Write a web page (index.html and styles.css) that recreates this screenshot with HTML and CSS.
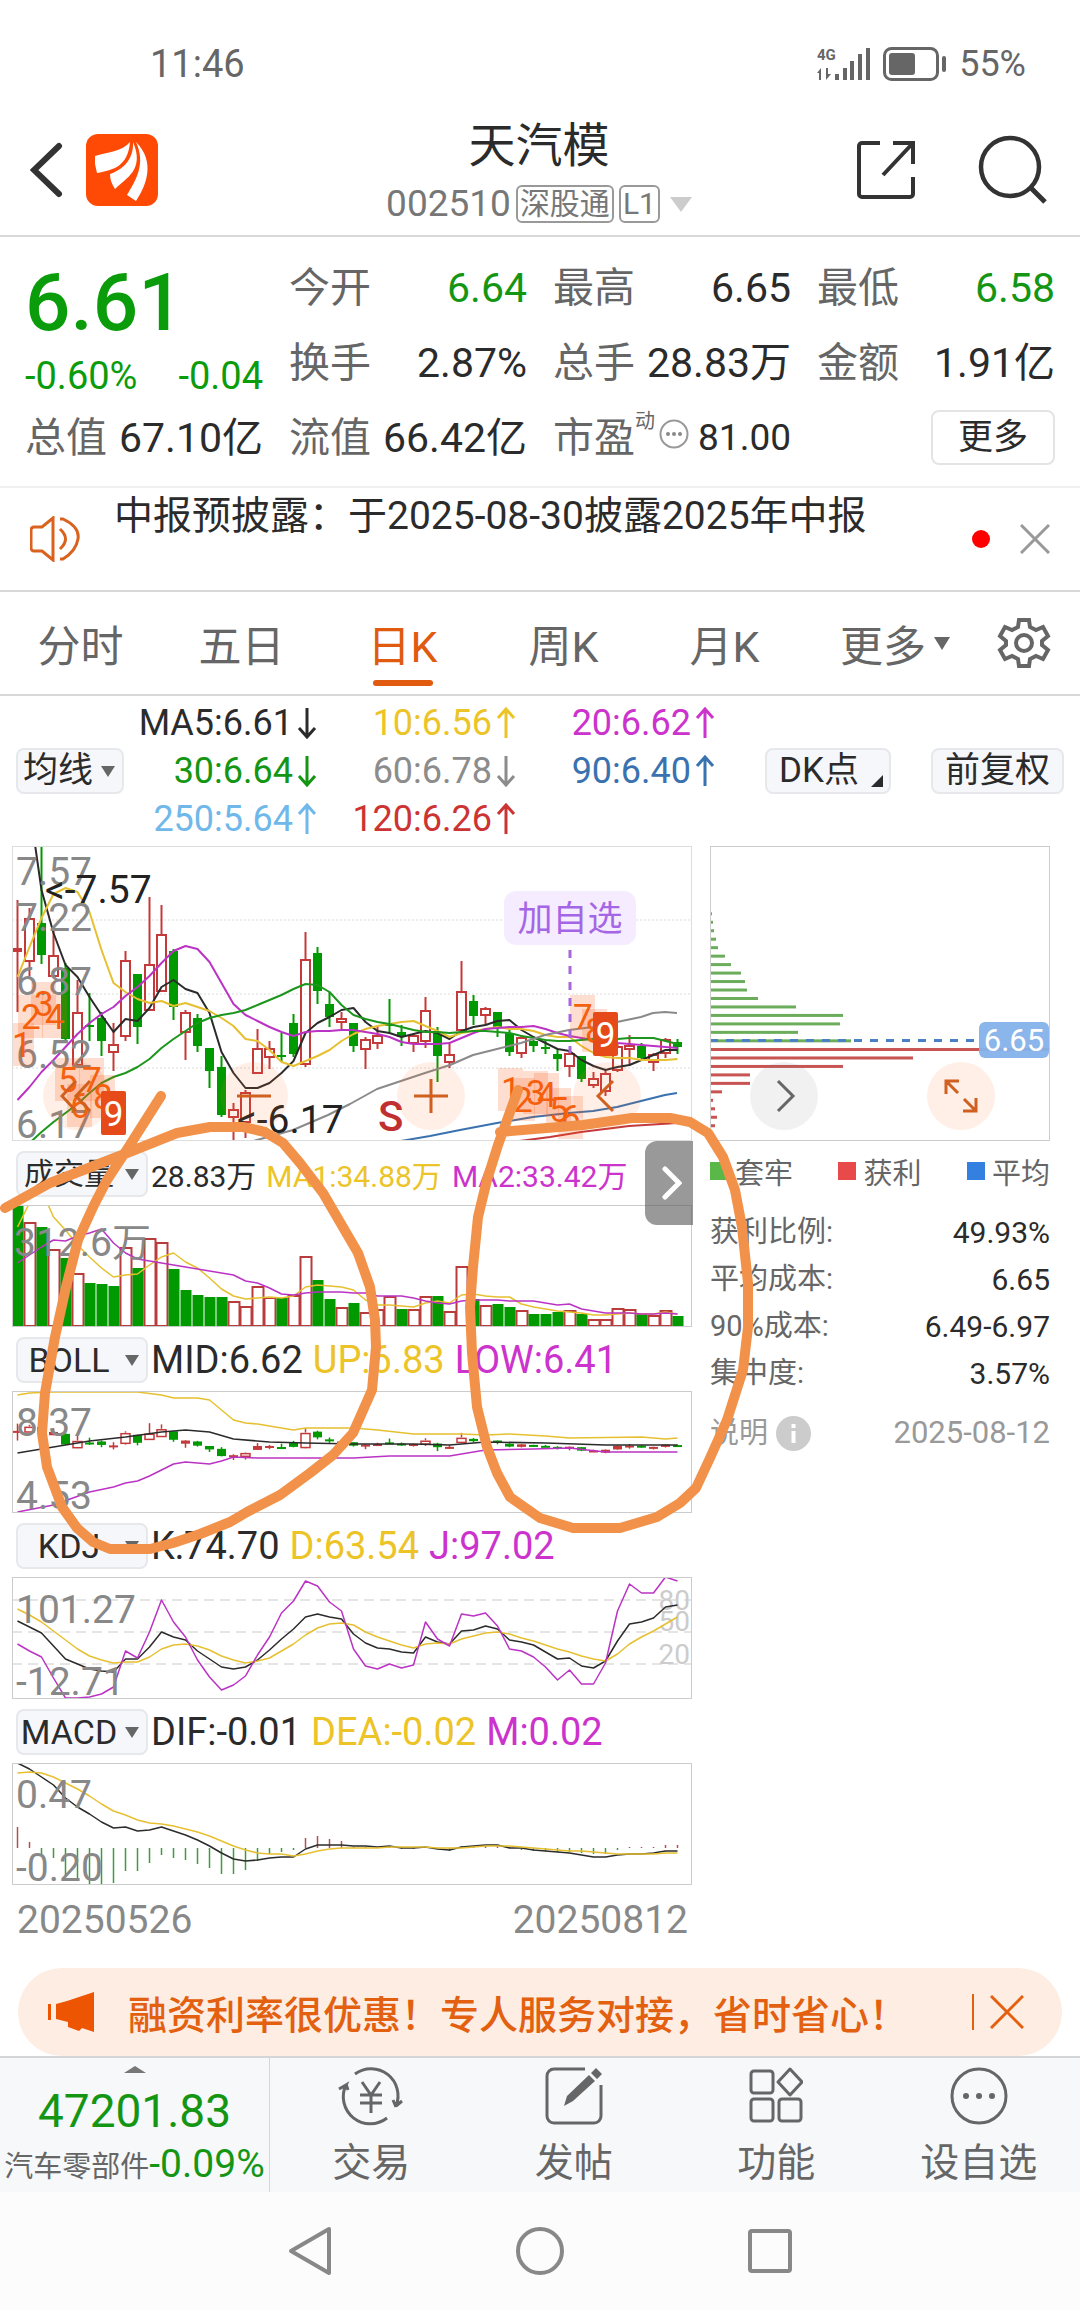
FILE: index.html
```html
<!DOCTYPE html>
<html lang="zh-CN">
<head>
  <meta charset="UTF-8" />
  <meta name="viewport" content="width=device-width, initial-scale=1.0" />
  <title>天汽模 002510</title>
  <link rel="stylesheet" href="styles.css">
</head>
<body>
  <!-- Arrow shapes shared by the MA list -->
  <svg class="defs" width="0" height="0" aria-hidden="true">
    <symbol id="up" viewBox="0 0 20 32"><path d="M10 31V2M2 11l8-9 8 9" fill="none" stroke="currentColor" stroke-width="3"/></symbol>
    <symbol id="down" viewBox="0 0 20 32"><path d="M10 1v29M2 21l8 9 8-9" fill="none" stroke="currentColor" stroke-width="3"/></symbol>
  </svg>

  <div class="status-bar">
    <span class="clock">11:46</span>
    <div class="status-right">
      <svg width="54" height="36" viewBox="0 0 54 36" fill="#666">
        <text x="0" y="14" font-size="15" font-weight="700">4G</text>
        <path d="M4 34V22l-4 5h2v7zM9 22v12l5-6h-3v-6zM18 28h4v6h-4zM26 22h4v12h-4zM33 15h4v19h-4zM41 8h4v26h-4zM49 2h4v32h-4z"/>
      </svg>
      <svg width="64" height="34" viewBox="0 0 64 34">
        <rect x="1.5" y="1.5" width="53" height="31" rx="7" fill="none" stroke="#666" stroke-width="3"/>
        <rect x="6" y="6" width="26" height="22" rx="3" fill="#666"/>
        <rect x="59" y="9" width="4" height="16" rx="2" fill="#666"/>
      </svg>
      <span>55%</span>
    </div>
  </div>

  <header class="header">
    <div class="header-side">
      <button class="icon-btn" aria-label="返回">
        <svg width="34" height="56" viewBox="0 0 34 56"><path d="M29 4L4 28l25 24" fill="none" stroke="#333" stroke-width="6" stroke-linecap="round"/></svg>
      </button>
      <svg width="72" height="72" viewBox="0 0 72 72">
        <rect width="72" height="72" rx="12" fill="#ff4a06"/>
        <path d="M44 8C36 18 21 18 9 22v8l2 9C28 36 42 32 44 8z" fill="#fff"/>
        <path d="M47 8C48 26 36 36 24 40c0 6 2 10 5 15C40 44 59 36 47 8z" fill="#fff"/>
        <path d="M50 8c10 22 0 38-9 53l9 6C60 52 70 28 50 8z" fill="#fff"/>
      </svg>
    </div>
    <div class="title-block">
      <h1>天汽模</h1>
      <div class="code-line">
        <span>002510</span>
        <span class="tag">深股通</span>
        <span class="tag">L1</span>
        <i class="tri tri-title"></i>
      </div>
    </div>
    <div class="header-side right">
      <button class="icon-btn" aria-label="分享">
        <svg width="60" height="60" viewBox="0 0 60 60" fill="none" stroke="#333" stroke-width="4"><path d="M24 3H6a3 3 0 0 0-3 3v48a3 3 0 0 0 3 3h48a3 3 0 0 0 3-3V37M37 3h20v21M57 3L27 35"/></svg>
      </button>
      <button class="icon-btn" aria-label="搜索">
        <svg width="70" height="70" viewBox="0 0 70 70" fill="none" stroke="#333" stroke-width="4.5"><circle cx="32" cy="32" r="29"/><path d="M53 53l14 14" stroke-width="5"/></svg>
      </button>
    </div>
  </header>

  <section class="quote">
    <div class="price-cell">
      <div class="price">6.61</div>
      <div class="change"><span>-0.60%</span><span>-0.04</span></div>
    </div>
    <div class="cell"><span>今开</span><b class="green">6.64</b></div>
    <div class="cell"><span>最高</span><b>6.65</b></div>
    <div class="cell"><span>最低</span><b class="green">6.58</b></div>
    <div class="cell"><span>换手</span><b>2.87%</b></div>
    <div class="cell"><span>总手</span><b>28.83万</b></div>
    <div class="cell"><span>金额</span><b>1.91亿</b></div>
    <div class="cell"><span>总值</span><b>67.10亿</b></div>
    <div class="cell"><span>流值</span><b>66.42亿</b></div>
    <div class="cell">
      <span>市盈<sup>动</sup></span>
      <svg class="dots" width="30" height="30" viewBox="0 0 30 30"><circle cx="15" cy="15" r="13.5" fill="none" stroke="#999" stroke-width="2"/><g fill="#888"><circle cx="9" cy="15" r="2"/><circle cx="15" cy="15" r="2"/><circle cx="21" cy="15" r="2"/></g></svg>
      <b class="pe">81.00</b>
    </div>
    <div class="cell end"><button class="more-btn">更多</button></div>
  </section>

  <section class="notice">
    <svg width="52" height="46" viewBox="0 0 52 46" fill="none" stroke="#d9621f" stroke-width="3"><path d="M23 2v42L12 35H4a3 3 0 0 1-3-3V14a3 3 0 0 1 3-3h8zM30 13q11 10 0 20M30 3h3q17 8 15 20t-15 20h-3"/></svg>
    <a class="notice-text" href="#">中报预披露：于2025-08-30披露2025年中报</a>
    <i class="red-dot"></i>
    <button class="icon-btn" aria-label="关闭">
      <svg width="30" height="30" viewBox="0 0 30 30"><path d="M1 1l28 28M29 1L1 29" stroke="#999" stroke-width="3"/></svg>
    </button>
  </section>

  <nav class="tabs">
    <button>分时</button>
    <button>五日</button>
    <button class="active">日K</button>
    <button>周K</button>
    <button>月K</button>
    <button class="tab-more">更多<i class="tri"></i></button>
    <button class="gear" aria-label="设置">
      <svg width="54" height="54" viewBox="0 0 54 54" fill="none" stroke="#666" stroke-width="4"><path d="M22 4h10l1 7 6 3 7-3 5 9-6 5v4l6 5-5 9-7-3-6 3-1 7H22l-1-7-6-3-7 3-5-9 6-5v-4l-6-5 5-9 7 3 6-3z"/><circle cx="27" cy="27" r="8"/></svg>
    </button>
  </nav>

  <section class="ma-bar">
    <label class="pick pick-ma"><select aria-label="指标"><option>均线</option></select></label>
    <div class="ma-list">
      <span class="c-black">MA5:6.61<svg><use href="#down"/></svg></span>
      <span class="c-yellow">10:6.56<svg><use href="#up"/></svg></span>
      <span class="c-magenta">20:6.62<svg><use href="#up"/></svg></span>
      <span class="c-green">30:6.64<svg><use href="#down"/></svg></span>
      <span class="c-gray">60:6.78<svg><use href="#down"/></svg></span>
      <span class="c-blue">90:6.40<svg><use href="#up"/></svg></span>
      <span class="c-sky">250:5.64<svg><use href="#up"/></svg></span>
      <span class="c-red">120:6.26<svg><use href="#up"/></svg></span>
    </div>
    <button class="chip-btn dk">DK点<i></i></button>
    <button class="chip-btn">前复权</button>
  </section>

  <section class="charts">
    <div class="left-charts">
      <svg class="chart" id="kline" viewBox="0 0 680 295"></svg>

      <div class="sub-head small">
        <label class="pick"><select aria-label="副图一"><option>成交量</option></select></label>
        <span class="c-black">28.83万</span><span class="c-yellow">MA1:34.88万</span><span class="c-magenta">MA2:33.42万</span>
        <button class="expand" aria-label="展开">
          <svg width="20" height="34" viewBox="0 0 20 34"><path d="M3 3l14 14L3 31" fill="none" stroke="#fff" stroke-width="5" stroke-linecap="round"/></svg>
        </button>
      </div>
      <svg class="chart" id="volume" viewBox="0 0 680 122"></svg>

      <div class="sub-head">
        <label class="pick"><select aria-label="副图二"><option>BOLL</option></select></label>
        <span class="c-black">MID:6.62</span><span class="c-yellow">UP:6.83</span><span class="c-magenta">LOW:6.41</span>
      </div>
      <svg class="chart" id="boll" viewBox="0 0 680 122"></svg>

      <div class="sub-head">
        <label class="pick"><select aria-label="副图三"><option>KDJ</option></select></label>
        <span class="c-black">K:74.70</span><span class="c-yellow">D:63.54</span><span class="c-magenta">J:97.02</span>
      </div>
      <svg class="chart" id="kdj" viewBox="0 0 680 122"></svg>

      <div class="sub-head">
        <label class="pick"><select aria-label="副图四"><option>MACD</option></select></label>
        <span class="c-black">DIF:-0.01</span><span class="c-yellow">DEA:-0.02</span><span class="c-magenta">M:0.02</span>
      </div>
      <svg class="chart" id="macd" viewBox="0 0 680 122"></svg>

      <div class="dates"><span>20250526</span><span>20250812</span></div>
    </div>

    <div class="right-panel">
      <svg class="chart" id="chips" viewBox="0 0 340 295"></svg>
      <div class="legend">
        <span><i class="sq-green"></i>套牢</span>
        <span><i class="sq-red"></i>获利</span>
        <span><i class="sq-blue"></i>平均</span>
      </div>
      <dl class="stats">
        <dt>获利比例:</dt><dd>49.93%</dd>
        <dt>平均成本:</dt><dd>6.65</dd>
        <dt>90%成本:</dt><dd>6.49-6.97</dd>
        <dt>集中度:</dt><dd>3.57%</dd>
      </dl>
      <div class="explain">
        <span>说明</span>
        <svg width="35" height="35" viewBox="0 0 35 35"><circle cx="17.5" cy="17.5" r="17.5" fill="#ccc"/><path d="M17.5 8v4M17.5 15v12" stroke="#fff" stroke-width="4"/></svg>
        <time>2025-08-12</time>
      </div>
    </div>

    <!-- Round chart controls -->
    <div class="controls">
      <button aria-label="最左"><svg width="34" height="34" viewBox="0 0 34 34"><path d="M16 2L2 17l14 15M30 2L16 17l14 15"/></svg></button>
      <button aria-label="缩小"><svg width="34" height="34" viewBox="0 0 34 34"><path d="M0 17h34"/></svg></button>
      <button aria-label="放大"><svg width="34" height="34" viewBox="0 0 34 34"><path d="M0 17h34M17 0v34"/></svg></button>
      <button aria-label="左移"><svg width="34" height="34" viewBox="0 0 34 34"><path d="M23 2L8 17l15 15"/></svg></button>
      <button class="plain" aria-label="右移"><svg width="34" height="34" viewBox="0 0 34 34"><path d="M11 2l15 15-15 15"/></svg></button>
      <button aria-label="全屏"><svg width="34" height="34" viewBox="0 0 34 34"><path d="M15 2H2v13M2 2l12 12M19 32h13V19M32 32L20 20"/></svg></button>
    </div>

    <!-- Hand-drawn marks -->
    <svg class="marks" viewBox="0 846 1080 720">
      <path d="M161 1096L128 1148L107 1180L94 1205L78 1240L66 1287L55 1337L45 1393L42 1433L47 1467L62 1507L77 1528L93 1542L110 1549H150L173 1543L200 1534L230 1522L247 1512L280 1495L310 1473L333 1455L353 1433L372 1390L376 1347L375 1320L370 1287L358 1253L337 1217L323 1193L300 1163L283 1143L265 1132L243 1127H210L177 1133L127 1153L50 1183L5 1208"/>
      <path d="M518 1090L498 1145L487 1180L478 1217L473 1267L470 1307L472 1353L477 1407L487 1447L497 1473L510 1497L540 1518L573 1528H620L657 1517L680 1503L696 1488L710 1458L727 1420L743 1370L748 1327V1283L742 1227L735 1190L723 1157L708 1133L690 1122L670 1118H632L583 1125L500 1132"/>
    </svg>
  </section>

  <div class="banner">
    <svg width="46" height="40" viewBox="0 0 46 40" fill="#ee5503"><path d="M0 12h3v16H0zM8 12l11-3L46 0v40l-12-4-3 3-11-4v-5L8 27z"/></svg>
    <a href="#">融资利率很优惠！专人服务对接，省时省心！</a>
    <i class="divider"></i>
    <button class="icon-btn" aria-label="关闭">
      <svg width="34" height="34" viewBox="0 0 34 34"><path d="M1 1l32 32M33 1L1 33" stroke="#e2600f" stroke-width="3"/></svg>
    </button>
  </div>

  <nav class="bottom-nav">
    <a class="index" href="#">
      <i class="tri tri-up"></i>
      <strong>47201.83</strong>
      <span><small>汽车零部件</small>-0.09%</span>
    </a>
    <a href="#">
      <svg width="66" height="60" viewBox="0 0 66 60" fill="none" stroke="#666" stroke-width="3"><path d="M17 8A27 27 0 0 1 58 40l6-5M58 41l-3-7M49 52A27 27 0 0 1 8 19l-7 4M8 18l2 6M24 16l9 13 9-13M22 29h22M22 37h22M33 29v18"/></svg>
      交易
    </a>
    <a href="#">
      <svg width="58" height="60" viewBox="0 0 58 60" fill="none" stroke="#666" stroke-width="3"><path d="M40 3H9a7 7 0 0 0-7 7v40a7 7 0 0 0 7 7h40a7 7 0 0 0 7-7V19"/><path d="M19 40l3-10L44 9l6 6-22 20zM46 7l5-5 6 6-5 5z" fill="#666" stroke="none"/></svg>
      发帖
    </a>
    <a href="#">
      <svg width="54" height="60" viewBox="0 0 54 60" fill="none" stroke="#666" stroke-width="3"><rect x="2" y="5" width="22" height="22" rx="3"/><rect x="2" y="33" width="22" height="22" rx="3"/><rect x="30" y="33" width="22" height="22" rx="3"/><path d="M41 3l12 13-12 13-12-13z" stroke-linejoin="round"/></svg>
      功能
    </a>
    <a href="#">
      <svg width="58" height="60" viewBox="0 0 58 60"><circle cx="29" cy="30" r="27" fill="none" stroke="#666" stroke-width="3"/><g fill="#666"><circle cx="16" cy="30" r="3"/><circle cx="29" cy="30" r="3"/><circle cx="42" cy="30" r="3"/></g></svg>
      设自选
    </a>
  </nav>

  <div class="system-nav">
    <button aria-label="返回"><svg width="44" height="52" viewBox="0 0 44 52"><path d="M41 4v44L3 26z"/></svg></button>
    <button aria-label="主页"><svg width="50" height="50" viewBox="0 0 50 50"><circle cx="25" cy="25" r="22"/></svg></button>
    <button aria-label="最近"><svg width="46" height="46" viewBox="0 0 46 46"><rect x="3" y="3" width="40" height="40" rx="2"/></svg></button>
  </div>

  <script src="charts.js"></script>
</body>
</html>
```
FILE: styles.css
```css
* {
  margin: 0;
  padding: 0;
  box-sizing: border-box;
}

body {
  font-family: Roboto, "Noto Sans CJK SC", sans-serif;
  background-color: #fff;
  color: #2b2b2b;
}

button {
  font: inherit;
  color: inherit;
  background: none;
  border: none;
  cursor: pointer;
}

a {
  color: inherit;
  text-decoration: none;
}

svg {
  display: block;
  flex: none;
}

.defs {
  position: absolute;
}

.icon-btn {
  display: flex;
}

/* Small triangle used beside menus */
.tri {
  border: 8px solid transparent;
  border-top: 13px solid #666;
  border-bottom: none;
}

/* Text colours of the indicators */
.c-black { color: #2b2b2b; }
.c-yellow { color: #ecc428; }
.c-magenta { color: #cc33cc; }
.c-green { color: #149614; }
.c-gray { color: #8c8c8c; }
.c-blue { color: #3a72b0; }
.c-sky { color: #70b8ea; }
.c-red { color: #cc3333; }

/* Status bar */
.status-bar {
  display: flex;
  justify-content: space-between;
  align-items: center;
  height: 128px;
  padding: 0 54px 0 150px;
  font-size: 38px;
  color: #666;
}

.status-right {
  display: flex;
  align-items: center;
  gap: 12px;
  font-size: 36px;
}

/* Header */
.header {
  display: flex;
  justify-content: space-between;
  height: 109px;
  padding: 0 32px 0 30px;
  border-bottom: 2px solid #d8d8d8;
}

.header-side {
  flex: 1;
  display: flex;
  align-items: center;
  gap: 22px;
  padding-bottom: 24px;
}

.header-side.right {
  justify-content: flex-end;
  gap: 62px;
}

.title-block {
  text-align: center;
  margin-top: -12px;
}

.title-block h1 {
  font-size: 47px;
  line-height: 60px;
  font-weight: 400;
}

.code-line {
  display: flex;
  align-items: center;
  gap: 5px;
  margin-top: 8px;
  font-size: 37px;
  line-height: 40px;
  color: #777;
}

.tag {
  border: 2px solid #999;
  border-radius: 6px;
  padding: 0 2px;
  font-size: 30px;
  line-height: 34px;
}

.tri-title {
  margin-left: 5px;
  border-width: 15px 11px 0;
  border-top-color: #ccc;
}

/* Quote numbers */
.quote {
  display: grid;
  grid-template-columns: repeat(4, 1fr);
  grid-auto-rows: 75px;
  column-gap: 26px;
  padding: 13px 25px 11px;
  border-bottom: 2px solid #f0f0f0;
  font-size: 41px;
}

.price-cell {
  grid-row: span 2;
  color: #0a9c0a;
}

.price {
  font-size: 80px;
  line-height: 106px;
  font-weight: 500;
}

.change {
  display: flex;
  justify-content: space-between;
  font-size: 38px;
  line-height: 40px;
}

.cell {
  display: flex;
  justify-content: space-between;
  align-items: center;
  color: #666;
  line-height: 56px;
  white-space: nowrap;
}

.cell b {
  font-weight: 400;
  color: #2b2b2b;
}

.cell b.green {
  color: #149614;
}

.cell sup {
  font-size: 20px;
  line-height: 20px;
  vertical-align: 24px;
}

.cell .dots {
  margin: 0 6px 8px 0;
}

.cell b.pe {
  font-size: 37px;
}

.cell.end {
  justify-content: flex-end;
}

.more-btn {
  padding: 0 25px;
  border: 2px solid #e4e4e4;
  border-radius: 8px;
  font-size: 35px;
  line-height: 51px;
  color: #2b2b2b;
}

/* Notice line */
.notice {
  display: flex;
  align-items: center;
  height: 104px;
  padding: 0 30px;
  border-bottom: 2px solid #d8d8d8;
}

.notice-text {
  flex: 1;
  align-self: flex-start;
  padding-left: 32px;
  font-size: 39px;
  line-height: 56px;
}

.red-dot {
  width: 18px;
  height: 18px;
  margin-right: 30px;
  border-radius: 50%;
  background: #f00;
}

/* Period tabs */
.tabs {
  display: flex;
  height: 104px;
  border-bottom: 2px solid #d8d8d8;
  color: #666;
  font-size: 43px;
}

.tabs button {
  flex: 161;
  display: flex;
  align-items: center;
  justify-content: center;
}

.tabs .active {
  position: relative;
  color: #e05a10;
}

.tabs .active::after {
  content: "";
  position: absolute;
  bottom: 8px;
  width: 60px;
  height: 6px;
  border-radius: 3px;
  background: #e05a10;
}

.tabs .tab-more {
  flex: 180;
  gap: 8px;
}

.tabs .gear {
  flex: 77;
  padding-right: 18px;
}

/* Moving averages */
.ma-bar {
  display: flex;
  align-items: center;
  height: 150px;
  padding: 0 16px;
  font-size: 35px;
}

.ma-list {
  flex: 1;
  display: grid;
  grid-template-columns: 193px 199px 199px;
  font-size: 36px;
  line-height: 48px;
}

.ma-list span {
  display: flex;
  justify-content: flex-end;
  align-items: center;
  gap: 4px;
}

.ma-list svg {
  width: 20px;
  height: 32px;
}

.chip-btn,
.pick select {
  height: 46px;
  border: 2px solid #e6e8ec;
  border-radius: 8px;
  background: #f6f7fa;
  color: #2b2b2b;
  white-space: nowrap;
}

.chip-btn {
  padding: 0 12px;
  line-height: 42px;
}

.dk {
  position: relative;
  padding-right: 30px;
  margin-right: 40px;
}

.dk i {
  position: absolute;
  right: 6px;
  bottom: 5px;
  border: 6px solid #2b2b2b;
  border-top-color: transparent;
  border-left-color: transparent;
}

.pick {
  position: relative;
  flex: none;
  width: 132px;
}

.pick select {
  appearance: none;
  width: 100%;
  padding: 0 26px 0 0;
  font: inherit;
  line-height: 42px;
  text-align-last: center;
}

.pick::after {
  content: "";
  position: absolute;
  right: 9px;
  top: 18px;
  border: 7px solid transparent;
  border-top: 11px solid #666;
  border-bottom: none;
}

.pick-ma {
  width: 108px;
}

.pick-ma select {
  padding-right: 24px;
}

/* Charts */
.charts {
  position: relative;
  display: grid;
  grid-template-columns: 680fr 340fr;
  column-gap: 18px;
  padding: 0 30px 0 12px;
}

.chart {
  width: 100%;
  height: auto;
}

.chart polyline {
  fill: none;
}

.chart text {
  fill: #888;
  font-size: 39px;
}

.chart .dark { fill: #222; }
.chart .level { fill: #ccc; font-size: 28px; }
.chart .nine { fill: #e64a19; }
.chart .white { fill: #fff; font-size: 35px; }
.chart .count { fill: #f4600c; font-size: 35px; }
.chart .square { fill: #f85a14; fill-opacity: .2; }
.chart .sell { fill: #c03030; font-size: 42px; font-weight: 500; }
.chart .pill { fill: #f5ecff; }
.chart .pill-text { fill: #a566e5; font-size: 35px; }
.chart .avg { fill: #85b2ea; fill-opacity: .95; }
.chart .avg-text { fill: #fff; font-size: 31px; }

.sub-head {
  position: relative;
  display: flex;
  align-items: center;
  gap: 10px;
  height: 64px;
  padding: 2px 0 0 4px;
  font-size: 38px;
  white-space: nowrap;
}

.sub-head .pick {
  margin-right: -7px;
  font-size: 34px;
}

.sub-head.small,
.sub-head.small .pick {
  font-size: 30px;
}

.expand {
  position: absolute;
  right: -1px;
  top: 0;
  display: flex;
  align-items: center;
  justify-content: center;
  width: 48px;
  height: 84px;
  padding-left: 6px;
  border-radius: 12px 0 0 12px;
  background: rgba(90, 90, 90, .62);
}

.dates {
  display: flex;
  justify-content: space-between;
  padding: 11px 4px 0 5px;
  font-size: 39px;
  line-height: 48px;
  color: #888;
}

/* Chip distribution panel */
.right-panel {
  color: #666;
  font-size: 29px;
}

.legend {
  display: flex;
  justify-content: space-between;
  height: 60px;
  align-items: center;
}

.legend span {
  display: flex;
  align-items: center;
  gap: 7px;
}

.legend i {
  width: 18px;
  height: 18px;
}

.sq-green { background: #5ab848; }
.sq-red { background: #e84a4a; }
.sq-blue { background: #3380e0; }

.stats {
  display: grid;
  grid-template-columns: auto auto;
  justify-content: space-between;
  padding-top: 8px;
  line-height: 47px;
}

.stats dd {
  text-align: right;
  font-size: 30px;
  color: #2b2b2b;
}

.explain {
  display: flex;
  align-items: center;
  gap: 8px;
  padding-top: 12px;
  line-height: 48px;
  color: #999;
}

.explain time {
  margin-left: auto;
  font-size: 31px;
}

/* Round buttons over the charts */
.controls {
  position: absolute;
  top: 216px;
  left: 43px;
  right: 85px;
  display: flex;
  justify-content: space-between;
}

.controls button {
  display: flex;
  align-items: center;
  justify-content: center;
  width: 68px;
  height: 68px;
  border-radius: 50%;
  background: rgba(252, 110, 40, .11);
}

.controls path {
  fill: none;
  stroke: #d0601f;
  stroke-width: 3;
}

.controls .plain {
  background: rgba(120, 120, 120, .1);
}

.controls .plain path {
  stroke: #666;
}

.marks {
  position: absolute;
  top: 0;
  left: 0;
  width: 100%;
  pointer-events: none;
}

.marks path {
  fill: none;
  stroke: #f2924a;
  stroke-width: 10;
  stroke-linecap: round;
  stroke-linejoin: round;
}

/* Promo banner */
.banner {
  display: flex;
  align-items: center;
  height: 88px;
  margin: 24px 18px 0;
  padding: 0 38px 0 30px;
  border-radius: 44px;
  background: #fdede3;
  color: #e2600f;
  font-size: 39px;
  font-weight: 500;
}

.banner a {
  flex: 1;
  padding-left: 34px;
}

.divider {
  width: 2px;
  height: 36px;
  margin-right: 16px;
  background: #e2600f;
}

/* Bottom navigation */
.bottom-nav {
  display: grid;
  grid-template-columns: 4fr 3fr 3fr 3fr 3fr;
  height: 136px;
  border-top: 2px solid #d4d6d8;
  background: #f6f8fa;
  color: #666;
  font-size: 39px;
}

.bottom-nav a {
  display: flex;
  flex-direction: column;
  align-items: center;
  gap: 8px;
  padding-top: 8px;
  line-height: 58px;
}

.bottom-nav .index {
  gap: 0;
  border-right: 1px solid #d4d6d8;
  color: #149614;
  line-height: 50px;
  white-space: nowrap;
}

.tri-up {
  border-width: 0 11px 7px;
  border-bottom: 7px solid #777;
}

.index strong {
  padding-top: 10px;
  font-size: 46px;
  line-height: 56px;
  font-weight: 400;
}

.index small {
  font-size: 29px;
  line-height: 29px;
  color: #666;
}

/* System navigation */
.system-nav {
  display: flex;
  height: 118px;
  padding: 0 18%;
  background: #fcfcfc;
}

.system-nav button {
  flex: 1;
  display: flex;
  align-items: center;
  justify-content: center;
}

.system-nav svg * {
  fill: none;
  stroke: #888;
  stroke-width: 4;
  stroke-linejoin: round;
}
```
FILE: charts.js
```js
const GREEN = '#009a00';
const RED = '#c43a3a';
const BLACK = '#2b2b2b';
const YELLOW = '#e6c030';
const MAGENTA = '#bb33c4';

const kline = document.getElementById('kline');
const volume = document.getElementById('volume');
const boll = document.getElementById('boll');
const kdj = document.getElementById('kdj');
const macd = document.getElementById('macd');
const chips = document.getElementById('chips');

// x centre of day i
const px = (i) => 5.5 + 12 * i;

function add(svg, tag, attrs, text) {
  const el = document.createElementNS('http://www.w3.org/2000/svg', tag);
  for (const key in attrs) el.setAttribute(key, attrs[key]);
  if (text) el.textContent = text;
  svg.appendChild(el);
  return el;
}

function rect(svg, x, y, width, height, fill) {
  add(svg, 'rect', { x, y, width, height, fill });
}

function line(svg, x1, y1, x2, y2, stroke, width, dash) {
  add(svg, 'line', { x1, y1, x2, y2, stroke, 'stroke-width': width, 'stroke-dasharray': dash || 'none' });
}

function label(svg, x, y, text, cls, anchor) {
  add(svg, 'text', { x, y, class: cls || '', 'text-anchor': anchor || 'start' }, text);
}

function poly(svg, points, stroke, width) {
  add(svg, 'polyline', { points: points.join(' '), stroke, 'stroke-width': width, 'stroke-linejoin': 'round' });
}

// one value per day, from day `start`
function series(svg, start, ys, stroke, width) {
  poly(svg, ys.map((y, i) => [px(start + i), y]), stroke, width);
}

// [day, y] pairs
function sparse(svg, pairs, stroke, width) {
  poly(svg, pairs.map(([i, y]) => [px(i), y]), stroke, width);
}

function frame(svg, w, h, color) {
  add(svg, 'rect', { x: 0.5, y: 0.5, width: w - 1, height: h - 1, fill: 'none', stroke: color });
}

// [up, body top, body bottom, high, low]
const candles = [
  [1,102,106,54,166],[1,72,116,62,130],[0,77,109,0,118],[1,109,131,84,131],[0,122,193,117,195],
  [1,166,220,134,221],[0,179,181,147,195],[0,172,195,166,210],[1,198,207,177,225],[1,114,191,105,195],
  [0,128,181,128,198],[1,118,165,51,165],[1,88,146,59,146],[0,105,161,103,174],[1,166,187,164,214],
  [0,172,200,168,206],[0,202,225,202,242],[0,221,269,210,271],[1,263,272,257,295],[1,246,277,244,292],
  [1,202,228,183,228],[1,202,212,195,223],[0,209,211,187,216],[0,177,208,168,211],[1,113,219,86,221],
  [0,107,145,101,158],[0,158,171,146,181],[1,172,177,166,183],[0,177,200,177,206],[1,193,204,191,223],
  [1,189,198,181,203],[0,178,180,153,188],[0,186,191,179,200],[1,189,198,188,206],[1,164,196,151,202],
  [0,186,210,181,236],[1,208,217,196,222],[1,145,185,115,185],[0,155,170,149,179],[1,162,170,161,179],
  [0,166,181,166,191],[0,187,206,184,210],[1,191,208,189,212],[0,195,200,194,206],[0,201,203,195,208],
  [0,208,213,203,225],[1,207,221,205,231],[0,210,233,210,236],[1,232,240,226,242],[1,227,246,225,250],
  [1,200,225,198,226],[1,199,204,189,220],[0,200,212,197,214],[1,208,217,207,225],[1,193,208,192,212],
  [0,196,201,193,208]
];

function drawCandles(svg, scale, wick) {
  candles.forEach(([up, top, bottom, high, low], i) => {
    const x = px(i);
    const color = up ? RED : GREEN;
    const t = scale(top), b = scale(bottom);
    if (up && b - t > 4) {
      line(svg, x, scale(high), x, t, color, wick);
      line(svg, x, b, x, scale(low), color, wick);
      add(svg, 'rect', { x: x - 4.5, y: t + 1, width: 9, height: b - t - 2, fill: 'none', stroke: color, 'stroke-width': wick });
    } else {
      line(svg, x, scale(high), x, scale(low), color, wick);
      rect(svg, x - 4.5, t, 9, Math.max(b - t, 2), color);
    }
  });
}

// Daily K
[74, 148, 222].forEach((y) => line(kline, 0, y, 680, y, '#e8e8e8', 1.5, '2 2'));
drawCandles(kline, (y) => y, 2);
series(kline, 1, [-40,44,87,119,131,151,169,186,173,175,162,141,134,143,147,167,206,227,242,242,237,227,215,187,177,171,164,162,176,185,187,191,188,185,187,193,185,181,179,175,174,184,191,197,203,205,214,220,224,221,219,214,209,204,204], BLACK, 2);
series(kline, 0, [131,101,72,48,42,46,66,104,137,146,153,157,155,160,157,161,165,172,180,193,195,204,216,220,215,210,204,195,188,183,180,178,176,175,180,185,191,187,185,183,181,183,183,185,189,191,191,200,207,211,212,212,214,214,214,213], YELLOW, 2);
series(kline, 0, [254,241,226,214,201,188,177,168,161,150,141,130,117,105,100,103,116,137,158,169,175,181,186,190,186,185,185,184,184,186,188,191,196,198,198,198,197,192,187,183,182,181,181,180,183,187,190,192,194,195,197,198,199,200,201,202], MAGENTA, 2);
series(kline, 1, [297,286,276,267,258,247,237,231,227,221,213,202,193,185,177,172,169,167,164,159,154,149,143,138,139,146,159,169,173,176,178,181,184,186,186,187,186,185,185,186,187,190,192,194,195,195,194,193,193,193,192,192,192,195,198], '#1c961c', 2);
poly(kline, ['238,296 281,284 316,269 338,258 365,243 389,235 413,227 438,219 461,209 485,203 509,197 533,189 557,184 581,181 605,176 629,171 641,167 653,166 665,167'], '#8a8a8a', 2);
poly(kline, ['383,296 418,290 448,284 485,277 521,271 557,267 581,265 605,261 629,255 653,249 665,247'], '#3a72b0', 2);
poly(kline, ['500,296 538,291 569,286 617,280 665,277'], RED, 2);

label(kline, 4, 39, '7.57');
label(kline, 4, 85, '7.22');
label(kline, 4, 149, '6.87');
label(kline, 4, 222, '6.52');
label(kline, 4, 292, '6.17');
label(kline, 33, 57, '<-7.57', 'dark');
label(kline, 225, 287, '<-6.17', 'dark');

// nine-turn counts: [digit, x, baseline]
[
  ['1', 0, 211], ['2', 9, 183], ['3', 22, 170], ['4', 33, 183], ['5', 46, 246], ['6', 58, 272], ['7', 70, 246], ['8', 81, 263],
  ['1', 489, 256], ['2', 501, 266], ['3', 514, 259], ['4', 525, 261], ['5', 537, 276], ['6', 549, 284], ['7', 561, 183], ['8', 573, 197]
].forEach(([digit, x, y]) => {
  add(kline, 'rect', { x: x - 3, y: y - 34, width: 25, height: 43, class: 'square' });
  label(kline, x, y, digit, 'count');
});
[[89, 245], [581, 166]].forEach(([x, y]) => {
  add(kline, 'rect', { x, y, width: 25, height: 44, rx: 2, class: 'nine' });
  label(kline, x + 12.5, y + 35, '9', 'white', 'middle');
});
label(kline, 366, 285, 'S', 'sell');
line(kline, 558, 104, 558, 207, '#a566e0', 3, '8 8');
add(kline, 'rect', { x: 492, y: 45, width: 132, height: 54, rx: 12, class: 'pill' });
label(kline, 558, 85, '加自选', 'pill-text', 'middle');
frame(kline, 680, 295, '#ddd');

// Volume: [up, top]
[
  [0,1],[1,17],[0,22],[1,44],[0,53],[1,68],[0,78],[0,79],[0,81],[1,42],[0,63],[1,33],[1,37],[0,64],[0,85],[0,90],[0,92],[0,92],[1,96],
  [1,101],[1,81],[1,92],[0,93],[1,90],[1,51],[0,75],[0,94],[1,102],[0,98],[1,107],[1,104],[1,91],[0,104],[1,104],[1,91],[0,91],[1,106],
  [1,61],[0,94],[1,100],[0,99],[0,102],[1,105],[0,109],[0,109],[0,107],[1,105],[0,109],[1,114],[1,114],[1,103],[1,104],[0,109],[1,110],
  [1,105],[0,111]
].forEach(([up, top], i) => {
  if (up) {
    add(volume, 'rect', { x: px(i) - 5, y: top + 1, width: 11, height: 120 - top, fill: '#fff', stroke: '#b83c3c', 'stroke-width': 2 });
  } else {
    rect(volume, px(i) - 5, top, 11, 121 - top, GREEN);
  }
});
series(volume, 0, [22,-2,-15,12,25,40,52,63,72,70,69,60,52,48,57,63,73,84,91,94,93,92,93,91,82,80,81,82,85,95,100,100,101,102,98,96,98,90,89,91,92,92,99,102,104,106,107,108,110,110,109,108,109,109,107,109], YELLOW, 1.5);
series(volume, 0, [58,50,42,35,36,31,28,24,38,48,54,56,58,60,62,64,66,68,70,76,78,83,89,90,88,87,87,87,88,88,91,91,91,93,96,98,99,96,95,95,95,96,96,96,98,100,99,104,106,108,108,108,109,109,108,109], MAGENTA, 1.5);
label(volume, 2, 51, '312.6万');
frame(volume, 680, 122, '#ccc');

// BOLL
drawCandles(boll, (y) => 58 + (y - 222) * 0.151, 1.5);
sparse(boll, [[0,4],[1,2],[3,1],[10,1],[12,4],[13,7],[15,7],[16,9],[17,19],[18,29],[19,32],[20,33],[23,39],[24,37],[28,37],[30,39],[33,43],[37,43],[39,44],[41,43],[44,45],[46,47],[52,46],[54,48],[55,47]], YELLOW, 1.5);
sparse(boll, [[0,62],[3,56],[6,50],[9,46],[12,41],[14,39],[16,41],[18,48],[21,51],[24,52],[28,53],[33,53],[36,54],[39,51],[44,52],[49,54],[55,54]], BLACK, 1.5);
sparse(boll, [[0,121],[3,114],[6,101],[8,96],[9,92],[10,90],[11,85],[12,79],[13,73],[14,71],[16,73],[17,70],[18,66],[20,67],[28,67],[31,65],[36,65],[39,59],[43,58],[46,57],[49,61],[55,61]], MAGENTA, 1.5);
label(boll, 4, 45, '8.37');
label(boll, 4, 118, '4.53');
frame(boll, 680, 122, '#ccc');

// KDJ
[23, 55, 87].forEach((y) => line(kdj, 0, y, 680, y, '#ddd', 1.5, '10 6'));
label(kdj, 678, 33, '80', 'level', 'end');
label(kdj, 678, 54, '50', 'level', 'end');
label(kdj, 678, 87, '20', 'level', 'end');
series(kdj, 0, [44,50,56,69,82,87,92,94,95,82,82,70,55,60,63,74,82,90,92,90,83,73,62,52,40,37,40,42,57,66,71,72,75,76,60,65,67,54,53,49,52,63,65,68,75,82,81,89,91,84,64,47,45,41,30,28], BLACK, 1.5);
series(kdj, 0, [32,38,45,54,63,72,79,83,86,85,85,80,72,68,67,69,73,79,83,86,84,81,74,67,58,51,47,46,48,55,60,64,68,71,67,66,67,62,59,56,55,57,61,64,68,72,75,79,82,84,77,67,60,54,47,40], YELLOW, 1.5);
series(kdj, 0, [67,74,80,101,121,121,120,117,110,74,81,55,23,45,60,83,100,113,108,99,78,60,36,24,4,9,25,34,72,89,92,87,91,88,45,62,69,37,39,36,49,72,74,80,90,103,93,107,107,86,34,7,16,16,0,4], MAGENTA, 1.5);
label(kdj, 4, 46, '101.27');
label(kdj, 4, 118, '-12.71');
frame(kdj, 680, 122, '#ccc');

// MACD, zero line at 85
[64,79,92,95,114,117,121,122,120,108,108,100,92,95,97,101,105,111,111,107,98,91,89,87,75,73,76,78,84,84,84,84,86,86,84,86,88,83,83,82,83,84,87,88,88,89,89,90,91,91,87,84,84,84,82,82]
  .forEach((y, i) => line(macd, px(i), 85, px(i), y, y < 85 ? '#b05050' : '#3c9c3c', 1.5));
series(macd, 0, [0,6,14,22,35,44,51,59,65,64,68,67,64,68,72,77,83,90,96,98,97,95,94,94,86,82,82,82,83,83,84,83,85,85,84,86,87,84,83,82,82,85,85,87,88,89,90,92,94,94,92,91,91,90,88,88], BLACK, 1.5);
series(macd, 0, [10,9,10,14,20,26,33,41,48,52,57,60,61,63,66,69,73,78,83,87,90,91,91,93,91,88,86,85,85,85,85,84,84,84,84,85,85,85,84,83,83,83,84,85,86,87,88,88,89,90,91,91,91,91,90,90], YELLOW, 1.5);
label(macd, 4, 45, '0.47');
label(macd, 4, 118, '-0.20');
frame(macd, 680, 122, '#ccc');

// Chip distribution
const step = 8.47;
[1,1,1,1,1,1,1,2,3,4,6,8,15,21,31,35,37,48,86,133,130,88,141].forEach((w, i) => rect(chips, 0, 7 + i * step, w, 3, '#6cad5c'));
[340,203,133,40,40,12,3,5,7,5].forEach((w, i) => rect(chips, 0, 202 + i * step, w, 3, '#c85454'));
line(chips, 0, 194.5, 264, 194.5, '#4a80c4', 3, '8 8');
add(chips, 'rect', { x: 269, y: 176, width: 70, height: 36, rx: 6, class: 'avg' });
label(chips, 304, 205, '6.65', 'avg-text', 'middle');
frame(chips, 340, 295, '#ccc');
```
